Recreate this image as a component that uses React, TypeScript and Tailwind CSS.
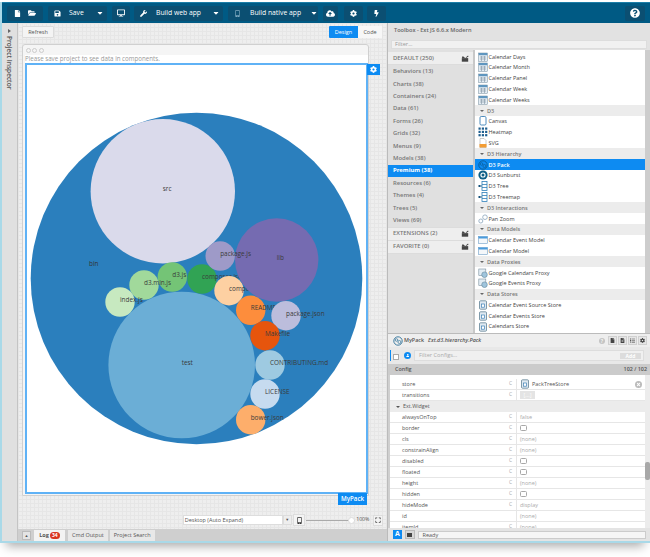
import { FaBolt, FaCloudUploadAlt, FaCog, FaDesktop, FaFile, FaFileAlt, FaFolderOpen, FaList, FaMobileAlt, FaQuestionCircle, FaSave, FaTimes, FaUser, FaWrench, FaCaretDown, FaExpand } from "react-icons/fa";

const bubbles = [
  { l: "src", x: 162.8, y: 191.3, r: 72.2, c: "#dadaeb" },
  { l: "test", x: 181.7, y: 365, r: 73.3, c: "#6baed6" },
  { l: "d3.js", x: 172.3, y: 277, r: 14.7, c: "#74c476" },
  { l: "d3.min.js", x: 144, y: 285, r: 14.7, c: "#a1d99b" },
  { l: "index.js", x: 120, y: 302, r: 14.7, c: "#c7e9c0" },
  { l: "composer.json", x: 202, y: 279, r: 14.7, c: "#31a354" },
  { l: "composer.lock", x: 229, y: 290.7, r: 14.7, c: "#fdd0a2" },
  { l: "lib", x: 276.7, y: 260, r: 41.7, c: "#756bb1" },
  { l: "package.js", x: 220.2, y: 256, r: 14.7, c: "#9e9ac8" },
  { l: "README.md", x: 250.7, y: 310.3, r: 14.7, c: "#fd8d3c" },
  { l: "package.json", x: 286, y: 315.7, r: 14.7, c: "#bcbddc" },
  { l: "Makefile", x: 265, y: 335.7, r: 14.7, c: "#e6550d" },
  { l: "CONTRIBUTING.md", x: 270, y: 365, r: 14.7, c: "#9ecae1" },
  { l: "LICENSE", x: 265, y: 394, r: 14.7, c: "#c6dbef" },
  { l: "bower.json", x: 250.7, y: 419.7, r: 14.7, c: "#fdae6b" },
];

const categories = ["Behaviors (13)", "Charts (38)", "Containers (24)", "Data (61)", "Forms (26)", "Grids (32)", "Menus (9)", "Models (38)", "Premium (38)", "Resources (6)", "Themes (4)", "Trees (5)", "Views (69)"];

type Kind = "cal" | "canvas" | "heat" | "svg" | "pack" | "sun" | "tree" | "pan" | "model" | "proxy" | "store";

const toolbox: { h?: boolean; t: string; k?: Kind; sel?: boolean }[] = [
  { t: "Calendar Days", k: "cal" },
  { t: "Calendar Month", k: "cal" },
  { t: "Calendar Panel", k: "cal" },
  { t: "Calendar Week", k: "cal" },
  { t: "Calendar Weeks", k: "cal" },
  { h: true, t: "D3" },
  { t: "Canvas", k: "canvas" },
  { t: "Heatmap", k: "heat" },
  { t: "SVG", k: "svg" },
  { h: true, t: "D3 Hierarchy" },
  { t: "D3 Pack", k: "pack", sel: true },
  { t: "D3 Sunburst", k: "sun" },
  { t: "D3 Tree", k: "tree" },
  { t: "D3 Treemap", k: "tree" },
  { h: true, t: "D3 Interactions" },
  { t: "Pan Zoom", k: "pan" },
  { h: true, t: "Data Models" },
  { t: "Calendar Event Model", k: "model" },
  { t: "Calendar Model", k: "model" },
  { h: true, t: "Data Proxies" },
  { t: "Google Calendars Proxy", k: "proxy" },
  { t: "Google Events Proxy", k: "proxy" },
  { h: true, t: "Data Stores" },
  { t: "Calendar Event Source Store", k: "store" },
  { t: "Calendar Events Store", k: "store" },
  { t: "Calendars Store", k: "store" },
];

const configs: { n: string; c?: boolean; v?: string; check?: boolean }[] = [
  { n: "alwaysOnTop", c: true, v: "false" },
  { n: "border", c: true, check: true },
  { n: "cls", c: true, v: "(none)" },
  { n: "constrainAlign", c: true, v: "(none)" },
  { n: "disabled", c: true, check: true },
  { n: "floated", c: true, check: true },
  { n: "height", c: true, v: "(none)" },
  { n: "hidden", c: true, check: true },
  { n: "hideMode", c: true, v: "display" },
  { n: "id", v: "(none)" },
  { n: "itemId", c: true, v: "(none)" },
];

function ToolIcon({ k, sel }: { k: Kind; sel?: boolean }) {
  return (
    <svg viewBox="0 0 10 10" className="w-[10px] h-[10px] shrink-0">
      {k === "cal" && (
        <g>
          <rect x="0.7" y="1" width="8.6" height="8.3" fill="#e4ecf3" stroke="#6f8798" strokeWidth="0.5" />
          <rect x="0.7" y="1" width="8.6" height="2.2" fill="#5f96bf" />
          <path d="M2 5h6M2 7h6M3.5 4v5M6.5 4v5" stroke="#7f93a3" strokeWidth="0.6" />
        </g>
      )}
      {k === "canvas" && <rect x="2" y="0.5" width="6" height="8.5" rx="1.2" fill="none" stroke="#3b7fb5" strokeWidth="0.9" />}
      {k === "heat" && (
        <g fill="#1f5f8f">
          {[0.5, 3.8, 7.1].map((y) => [0.5, 3.8, 7.1].map((x) => <rect key={`${x}-${y}`} x={x} y={y} width="2.2" height="2.2" />))}
        </g>
      )}
      {k === "svg" && (
        <g>
          <path d="M2 0.5h4l2 2v7h-6z" fill="#fff" stroke="#999" strokeWidth="0.5" />
          <rect x="1.5" y="6" width="7" height="3.5" fill="#f39c32" />
        </g>
      )}
      {k === "pack" && (
        <g fill="none" stroke={sel ? "#0a5c96" : "#2f7299"}>
          <circle cx="5" cy="5" r="4.2" strokeWidth="0.9" />
          <circle cx="3.5" cy="4" r="1.3" strokeWidth="0.7" />
          <circle cx="6.4" cy="6" r="1.5" strokeWidth="0.7" />
        </g>
      )}
      {k === "sun" && (
        <g>
          <circle cx="5" cy="5" r="4.6" fill="#0f5f86" />
          <circle cx="5" cy="5" r="2.6" fill="#fff" />
          <circle cx="5" cy="5" r="1.5" fill="#0f5f86" />
        </g>
      )}
      {k === "tree" && (
        <g>
          <rect x="4" y="0.5" width="5" height="9" fill="#fff" stroke="#2f7fb8" strokeWidth="0.8" />
          <path d="M4 3.5h5M4 6.5h5" stroke="#2f7fb8" strokeWidth="0.8" />
          <rect x="0.5" y="4" width="2" height="2" fill="#14507a" />
          <path d="M2.5 5h1.5" stroke="#14507a" strokeWidth="0.7" />
        </g>
      )}
      {k === "pan" && (
        <g fill="none" stroke="#8aa5bb" strokeWidth="0.8">
          <circle cx="2.8" cy="7" r="2" />
          <circle cx="7" cy="3.2" r="2.3" />
        </g>
      )}
      {k === "model" && (
        <g>
          <rect x="0.5" y="1.5" width="9" height="7" fill="#f4f7fa" stroke="#6f9fc6" strokeWidth="0.6" />
          <rect x="0.5" y="1.5" width="9" height="2" fill="#4a9bdc" />
        </g>
      )}
      {k === "proxy" && (
        <g>
          <rect x="0.8" y="1" width="7" height="6.5" fill="#e3edf4" stroke="#7a8f9e" strokeWidth="0.6" />
          <circle cx="6.5" cy="6.7" r="2.8" fill="#9fc4dc" stroke="#56788e" strokeWidth="0.5" />
        </g>
      )}
      {k === "store" && (
        <g>
          <rect x="1.5" y="0.8" width="7" height="8.4" rx="1" fill="#dfe9f1" stroke="#4f7288" strokeWidth="0.7" />
          <rect x="3.4" y="4" width="3.2" height="3.2" fill="#fff" stroke="#3b7fb5" strokeWidth="0.7" />
        </g>
      )}
    </svg>
  );
}

function BoxIcon() {
  return (
    <svg viewBox="0 0 10 8" className="w-[8px] h-[7px]">
      <path d="M1 3.5h8V8H1z" fill="#444" />
      <path d="M1 3.5L2.2 1l3 2.5zM5.5 3.2L8.8 0.3l0.6 1.2L7 3.2z" fill="#444" />
    </svg>
  );
}

function TopButton({ children, className }: { children: React.ReactNode; className: string }) {
  return <div className={`flex items-center h-[15px] shrink-0 rounded-[2px] bg-[#0b4f72] text-white text-[6.8px] font-medium whitespace-nowrap ${className}`}>{children}</div>;
}

function Check() {
  return <span className="block w-[6.5px] h-[6.5px] rounded-[1.5px] border border-[#a8a8a8] bg-white" />;
}

function ConfigRow({ n, c, children }: { n: string; c?: boolean; children: React.ReactNode }) {
  return (
    <div className="flex h-[11px] shrink-0 items-center border-b border-[#e6e6e6] bg-white text-[5.5px] text-[#555] whitespace-nowrap">
      <span className="w-[119px] pl-[12px] shrink-0">{n}</span>
      <span className="w-[7px] shrink-0 text-[#aaa] text-[5px]">{c ? "C" : ""}</span>
      <div className="flex items-center gap-[2px] flex-1 h-full pl-[3px] border-l border-[#e6e6e6] text-[#aaa]">{children}</div>
    </div>
  );
}

export default function App() {
  return (
    <div className="w-[650px] h-[557px] bg-white overflow-hidden pt-[2px] font-['Open_Sans',sans-serif]">
      <div className="w-[650px] h-[541px] border-l-2 border-b-2 border-[#a9d9e8] flex flex-col shadow-[0_9px_10px_-6px_rgba(0,0,0,0.35)] bg-[#e2e2e2]">
        {/* top toolbar */}
        <div className="h-[21px] shrink-0 bg-[#005a84] border-t border-[#1b7ea8] flex items-center pl-[5px] pr-[5px]">
          <TopButton className="w-[36px] justify-around px-[3px] mr-[5px]">
            <FaFile size={7} />
            <FaFolderOpen size={8} />
          </TopButton>
          <TopButton className="w-[59px] mr-[5px] pl-[6px] gap-[8px]">
            <FaSave size={7} className="shrink-0" />
            <span>Save</span>
            <FaCaretDown size={8} className="ml-auto mr-[3px] shrink-0" />
          </TopButton>
          <TopButton className="w-[18px] justify-center mr-[4px]">
            <FaDesktop size={8} />
          </TopButton>
          <TopButton className="w-[89px] pl-[6px] gap-[9px] mr-[5px]">
            <FaWrench size={7} className="shrink-0" />
            <span>Build web app</span>
            <FaCaretDown size={8} className="ml-auto mr-[3px] shrink-0" />
          </TopButton>
          <TopButton className="w-[90px] pl-[6px] gap-[9px] mr-[5px]">
            <FaMobileAlt size={7} className="text-[#7fa9c0] shrink-0" />
            <span>Build native app</span>
            <FaCaretDown size={8} className="ml-auto mr-[4px] shrink-0" />
          </TopButton>
          <TopButton className="w-[15px] justify-center mr-[6px]">
            <FaCloudUploadAlt size={9} />
          </TopButton>
          <TopButton className="w-[19px] justify-center mr-[4px]">
            <FaCog size={7} />
          </TopButton>
          <TopButton className="w-[19px] justify-center">
            <FaBolt size={7} />
          </TopButton>
          <TopButton className="w-[20px] justify-center ml-auto">
            <FaQuestionCircle size={10} />
          </TopButton>
        </div>

        <div className="flex flex-1 min-h-0">
          {/* inspector strip */}
          <div className="w-[16px] shrink-0 bg-[#e0e0e0] border-r border-[#c4c4c4] flex flex-col items-center pt-[6px] gap-[3px] text-[#555]">
            <span className="w-0 h-0 border-y-[2.5px] border-y-transparent border-l-[3px] border-l-[#666]" />
            <span className="[writing-mode:vertical-rl] text-[6.5px] font-semibold whitespace-nowrap">Project Inspector</span>
          </div>

          {/* center column */}
          <div className="w-[370px] shrink-0 flex flex-col border-r border-[#bbb]">
            <div className="flex-1 min-h-0 bg-[#eeeeee] bg-[linear-gradient(#e6e6e6_1px,transparent_1px),linear-gradient(90deg,#e6e6e6_1px,transparent_1px)] bg-[size:4px_4px] pl-[4px] pt-[3px] flex flex-col">
              <div className="flex justify-between h-[13px] pr-[5px]">
                <div className="w-[32px] h-[12px] rounded-[1px] bg-[#f4f4f4] border border-[#dcdcdc] flex items-center justify-center text-[5.5px] text-[#555]">Refresh</div>
                <div className="flex h-[12px] text-[5.5px]">
                  <span className="w-[29px] bg-[#0d8bf2] text-white flex items-center justify-center rounded-l-[1px]">Design</span>
                  <span className="w-[24px] bg-[#f7f7f7] text-[#555] flex items-center justify-center">Code</span>
                </div>
              </div>

              <div className="mt-[5px] w-[347px] h-[452px] shrink-0 rounded-t-[3px] border border-[#d0d0d0] bg-[#f5f5f5] flex flex-col">
                <div className="h-[10px] flex items-center gap-[1.6px] pl-[2.5px] shrink-0">
                  <span className="w-[5px] h-[5px] rounded-full border border-[#ccc]" />
                  <span className="w-[5px] h-[5px] rounded-full border border-[#ccc]" />
                  <span className="w-[5px] h-[5px] rounded-full border border-[#ccc]" />
                </div>
                <div className="ml-[2px] w-[343px] h-[8px] bg-white text-[6.2px] leading-[8px] text-[#999] shrink-0 whitespace-nowrap">Please save project to see data in components.</div>
                <div className="relative ml-[2px] w-[343px] h-[431px] shrink-0 border-2 border-[#5fb2f6] bg-white">
                  <svg viewBox="27 65 339 427" className="w-[339px] h-[427px] block font-['Open_Sans',sans-serif]">
                    <circle cx="196.5" cy="278.5" r="165.8" fill="#2b7fbd" />
                    <text x="89" y="266" fontSize="6.4" fill="#333">bin</text>
                    {bubbles.map((b) => (
                      <g key={b.l}>
                        <circle cx={b.x} cy={b.y} r={b.r} fill={b.c} />
                        <text x={b.x} y={b.y} fontSize="6.4" fill="#3a3a3a">{b.l}</text>
                      </g>
                    ))}
                  </svg>
                  <div className="absolute -right-[14px] -top-[1px] w-[13px] h-[11px] bg-[#0d8bf2] flex items-center justify-center text-white">
                    <FaCog size={7} />
                  </div>
                  <div className="absolute -right-[1px] -bottom-[13px] w-[29px] h-[12px] bg-[#0d8bf2] text-white text-[6.2px] font-semibold flex items-center justify-center">MyPack</div>
                </div>
              </div>

              <div className="flex items-center h-[12px] mt-[18px] pl-[160.7px] text-[5.5px] text-[#555] whitespace-nowrap">
                <div className="w-[100px] h-[9.5px] shrink-0 flex items-center pl-[1px] bg-white border border-[#ddd]">Desktop (Auto Expand)</div>
                <div className="w-[9px] h-[9.5px] shrink-0 bg-[#eee] border border-[#ddd] flex items-center justify-center text-[4px]">▼</div>
                <div className="w-[12px] h-[12px] shrink-0 ml-[1.5px] bg-[#f4f4f4] border border-[#ddd] flex items-center justify-center text-[#333]"><FaMobileAlt size={7} /></div>
                <div className="relative w-[49px] h-px shrink-0 bg-[#aaa] ml-[1px]">
                  <span className="absolute right-0 -top-[3px] w-[7px] h-[7px] rounded-full bg-white border border-[#ddd]" />
                </div>
                <span className="ml-[1px] shrink-0 text-[5.2px]">100%</span>
                <div className="w-[10px] h-[11px] shrink-0 ml-[4px] bg-[#f4f4f4] border border-[#ddd] flex items-center justify-center text-[#444]"><FaExpand size={6} /></div>
              </div>
            </div>

            {/* log tabs */}
            <div className="h-[12px] shrink-0 bg-[#cfcfcf] flex items-end pl-[3.7px] text-[5.5px] text-[#555] whitespace-nowrap">
              <div className="w-[9.5px] h-[9px] mb-[1px] mr-[2.5px] bg-[#e4e4e4] border border-[#bbb] flex items-center justify-center text-[4px]">▲</div>
              <div className="h-[11px] w-[31.5px] mr-[3px] bg-[#f3f3f3] flex items-center justify-center gap-[1px] font-bold">
                Log <span className="px-[2px] h-[7px] leading-[7px] rounded-full bg-[#d9341f] text-white text-[5px]">34</span>
              </div>
              <div className="h-[11px] w-[39.5px] mr-[2px] bg-[#e8e8e8] flex items-center justify-center">Cmd Output</div>
              <div className="h-[11px] w-[45px] bg-[#e8e8e8] flex items-center justify-center">Project Search</div>
            </div>
          </div>

          {/* right column */}
          <div className="flex-1 min-w-0 flex flex-col">
            <div className="h-[310px] shrink-0 flex flex-col bg-[#e2e2e2]">
              <div className="h-[17px] shrink-0 flex items-center pl-[6px] pb-[3px] text-[5.6px] font-semibold text-[#666] whitespace-nowrap">Toolbox - Ext JS 6.6.x Modern</div>
              <div className="h-[9px] shrink-0 mx-[3px] bg-[#f1f1f1] border border-[#ddd] flex items-center pl-[3px] text-[5.6px] text-[#999]">Filter...</div>
              <div className="flex flex-1 min-h-0 mt-[1px]">
                <div className="w-[87px] shrink-0 text-[5.9px] font-semibold text-[#777] bg-[#e0e0e0] border-r-2 border-[#c8c8c8] pt-[2px] whitespace-nowrap">
                  <div className="h-[13px] bg-[#eeeeee] flex items-center justify-between pl-[5px] pr-[4px] border-b border-[#dcdcdc]">
                    DEFAULT (250) <BoxIcon />
                  </div>
                  <div className="pt-[0.5px]">
                    {categories.map((c) => (
                      <div key={c} className={`h-[12.4px] flex items-center pl-[5px] ${c.startsWith("Premium") ? "bg-[#0d8bf2] text-white font-bold" : ""}`}>{c}</div>
                    ))}
                  </div>
                  <div className="mt-[0.5px] h-[13.5px] bg-[#eeeeee] flex items-center justify-between pl-[5px] pr-[4px] border-y border-[#dcdcdc]">
                    EXTENSIONS (2) <BoxIcon />
                  </div>
                  <div className="h-[13.5px] bg-[#eeeeee] flex items-center justify-between pl-[5px] pr-[4px] border-b border-[#dcdcdc]">
                    FAVORITE (0) <BoxIcon />
                  </div>
                </div>
                <div className="flex-1 min-w-0 overflow-hidden bg-white border-r-[5px] border-[#cdcdcd] pt-[1.3px] text-[5.5px] text-[#444] whitespace-nowrap">
                  {toolbox.map((t) =>
                    t.h ? (
                      <div key={t.t} className="h-[10.8px] bg-[#ececec] flex items-center pl-[5px] gap-[3px] font-semibold text-[#777]">
                        <span className="w-0 h-0 border-x-[2px] border-x-transparent border-t-[2.5px] border-t-[#666]" />
                        {t.t}
                      </div>
                    ) : (
                      <div key={t.t} className={`h-[10.8px] flex items-center pl-[3px] gap-[0.5px] ${t.sel ? "bg-[#0d8bf2] text-white font-semibold" : ""}`}>
                        {t.k && <ToolIcon k={t.k} sel={t.sel} />}
                        {t.t}
                      </div>
                    )
                  )}
                </div>
              </div>
            </div>

            {/* config panel */}
            <div className="flex-1 min-h-0 flex flex-col border-t border-[#bbb] bg-[#e8e8e8]">
              <div className="h-[13px] shrink-0 flex items-center pl-[5px] pr-[3px] gap-[1px] text-[5.4px] text-[#555] font-semibold bg-[#eeeeee] whitespace-nowrap">
                <ToolIcon k="pack" />
                <span>MyPack</span>
                <span className="italic ml-[3px]">Ext.d3.hierarchy.Pack</span>
                <div className="ml-auto flex items-center gap-[1px] text-[#444]">
                  <span className="w-[6px] h-[6px] mr-[2px] rounded-full bg-[#c4c4c4] text-white text-[5px] leading-[6px] text-center">?</span>
                  <span className="w-[9px] h-[9px] bg-[#e6e6e6] border border-[#d0d0d0] flex items-center justify-center"><FaFile size={5} /></span>
                  <span className="w-[9px] h-[9px] bg-[#e6e6e6] border border-[#d0d0d0] flex items-center justify-center"><FaFileAlt size={5} /></span>
                  <span className="w-[9px] h-[9px] bg-[#e6e6e6] border border-[#d0d0d0] flex items-center justify-center"><FaList size={5} /></span>
                  <span className="w-[9px] h-[9px] bg-[#e6e6e6] border border-[#d0d0d0] flex items-center justify-center"><FaCog size={5} /></span>
                </div>
              </div>
              <div className="h-[17px] shrink-0 flex items-center pr-[6px] pl-[1.5px] whitespace-nowrap">
                <span className="w-[1.5px] h-[11px] bg-[#0d8bf2] mr-[2px]" />
                <span className="w-[6px] h-[6px] mt-[3px] border border-[#aaa] bg-white" />
                <span className="w-[7px] h-[7px] ml-[5px] rounded-full bg-[#0d8bf2] flex items-center justify-center text-white"><FaUser size={3.5} /></span>
                <div className="flex-1 h-[10.5px] ml-[3px] bg-[#f0f0f0] border border-[#ddd] flex items-center pl-[4px] text-[5.6px] text-[#aaa]">
                  Filter Configs...
                  <span className="ml-auto mr-[2px] w-[21px] h-[6px] bg-[#dcdcdc] text-white text-[5px] font-bold text-center leading-[6px]">Add</span>
                </div>
              </div>
              <div className="h-[11px] shrink-0 bg-[#cbcbcb] flex items-center justify-between pl-[7px] pr-[3px] text-[5.4px] font-semibold text-[#555]">
                <span>Config</span>
                <span>102 / 102</span>
              </div>
              <div className="flex flex-1 min-h-0">
                <div className="flex-1 min-w-0 overflow-hidden bg-white border-l-[2px] border-l-[#cfcfcf] flex flex-col">
                  <div className="h-[4px] shrink-0 bg-white" />
                  <div className="border-l-[1.5px] border-[#0d8bf2] -ml-px">
                    <ConfigRow n="store" c>
                      <ToolIcon k="store" />
                      <span className="text-[#555]">PackTreeStore</span>
                      <FaTimes size={5} className="ml-auto mr-[3px] p-[1px] w-[7px] h-[7px] rounded-full bg-[#bbb] text-white" />
                    </ConfigRow>
                  </div>
                  <ConfigRow n="transitions" c>
                    <span className="w-[15px] text-center h-[8px] leading-[8px] bg-[#e4e4e4] text-white">[...]</span>
                  </ConfigRow>
                  <div className="h-[11px] shrink-0 bg-[#ececec] flex items-center pl-[6px] gap-[3px] text-[5.4px] text-[#555]">
                    <span className="w-0 h-0 border-x-[2px] border-x-transparent border-t-[2.5px] border-t-[#555]" />
                    Ext.Widget
                  </div>
                  {configs.map((c) => (
                    <ConfigRow key={c.n} n={c.n} c={c.c}>
                      {c.check ? <Check /> : c.v}
                    </ConfigRow>
                  ))}
                </div>
                <div className="w-[5px] shrink-0 bg-[#ececec] pt-[87px]">
                  <div className="h-[18px] bg-[#a8a8a8] rounded-[2px]" />
                </div>
              </div>
              <div className="h-[13px] shrink-0 flex items-center pl-[5px] pr-[4px] bg-[#e4e4e4]">
                <span className="w-[9px] h-[9px] bg-[#0d8bf2] text-white text-[7px] font-bold flex items-center justify-center">A</span>
                <span className="w-[9.5px] h-[9px] ml-[3px] bg-[#d8d8d8] border border-[#bbb] flex items-center justify-center"><span className="w-[5px] h-[4px] bg-[#444]" /></span>
                <div className="flex-1 h-[8px] ml-[3px] bg-[#f6f6f6] border border-[#ccc] flex items-center pl-[4px] text-[5.5px] leading-[6px] text-[#555]">Ready</div>
              </div>
            </div>
          </div>
        </div>
      </div>
    </div>
  );
}
